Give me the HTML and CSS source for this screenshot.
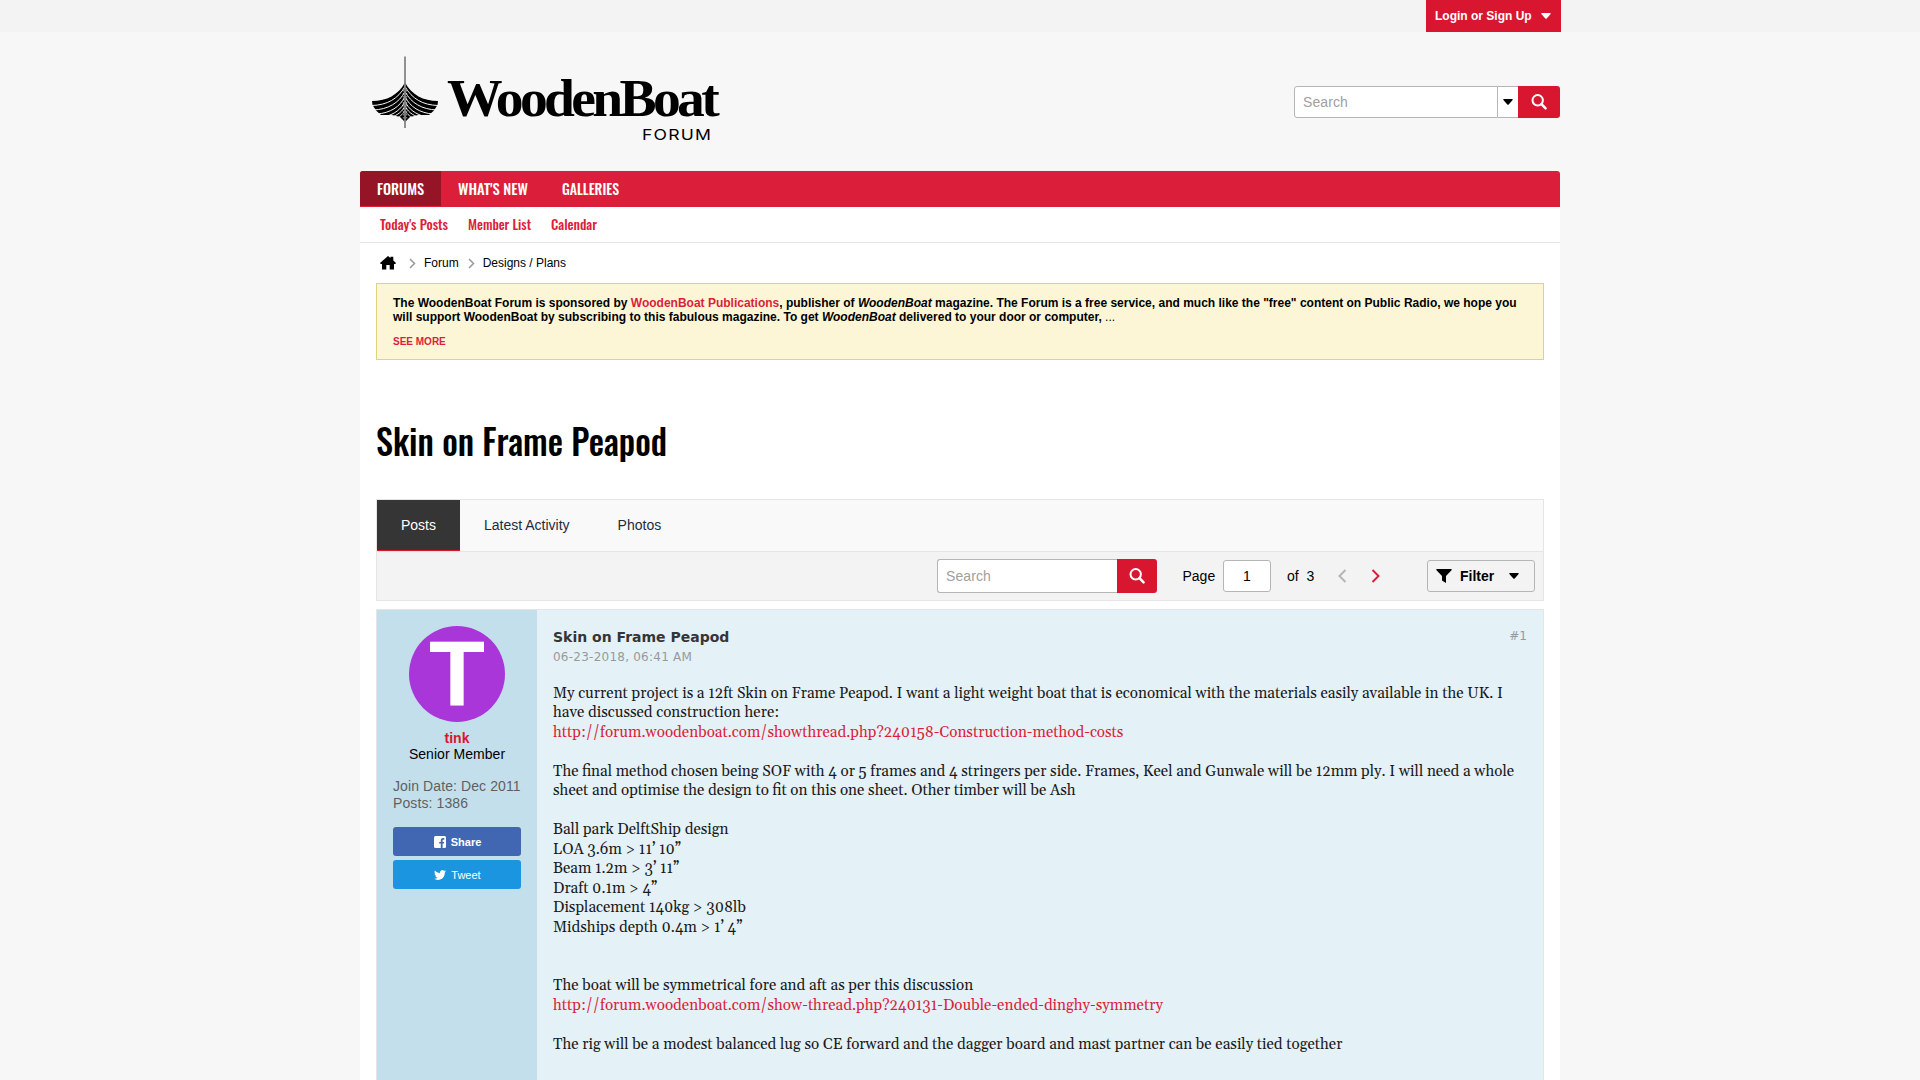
FILE: index.html
```html
<!DOCTYPE html>
<html lang="en">
<head>
<meta charset="utf-8">
<title>Skin on Frame Peapod - The WoodenBoat Forum</title>
<link rel="stylesheet" href="styles.css">
</head>
<body>
<div class="topbar"><div class="wrap topbar-in">
  <a class="login">Login or Sign Up <svg width="10" height="6" viewBox="0 0 10 6"><path d="M.6 0H9.4Q10 .3 9.6 1L5.7 5.4Q5 6 4.3 5.4L.4 1Q0 .3 .6 0Z" fill="#fff"/></svg></a>
</div></div>
<header class="wrap header">
  <svg class="logo" width="380" height="100" viewBox="360 47 380 100">
    <g id="half">
      <path d="M405 82.500C398 95 387 101 372 101L372.500 105L376 110.500L381 115H392L400 117L405 122Z"/>
      <g fill="none" stroke="#f7f7f7">
        <path d="M405 86.500C398 99 387 105 372 105.500" stroke-width="1"/>
        <path d="M405 91.500C399 103 388 109.500 373 110" stroke-width="1"/>
        <path d="M405 96.500C400 107 390 113 377 114" stroke-width="1"/>
        <path d="M405 101C402 109 394 114.500 384 117" stroke-width="1"/>
        <path d="M405 105.500C403 111 398 115 390 118" stroke-width="1"/>
        <path d="M405 110C404 113 401 116 396 118.500" stroke-width=".9"/>
      </g>
    </g>
    <use href="#half" transform="translate(810 0) scale(-1 1)"/>
    <path d="M405 56.500V128" stroke="#858585" stroke-width="1.800"/>
    <path d="M403.300 90V119M406.700 90V119" stroke="#ddd" stroke-width=".7" stroke-dasharray="1.500 1.500"/>
    <text class="logo-name" x="447" y="116" textLength="269" lengthAdjust="spacingAndGlyphs">WoodenBoat</text>
    <text class="logo-sub" x="642" y="139.500" textLength="70" lengthAdjust="spacingAndGlyphs">FORUM</text>
  </svg>
  <div class="search">
    <div class="search-input">Search</div>
    <div class="search-drop"><svg width="10" height="6" viewBox="0 0 10 6"><path d="M.6 0H9.4Q10 .3 9.6 1L5.700 5.400Q5 6 4.300 5.400L.4 1Q0 .3 .6 0Z"/></svg></div>
    <div class="search-go"><svg width="16" height="16" viewBox="0 0 16 16" fill="none" stroke="#fff" stroke-width="2"><circle cx="6.700" cy="6.300" r="5.200"/><path d="M10.500 10.200L14.600 14.400" stroke-width="2.500" stroke-linecap="round"/></svg></div>
  </div>
</header>
<main class="wrap page">
  <nav class="nav">
    <a class="nav-item nav-on"><svg width="47" height="18"><text x="0" y="15" textLength="47" lengthAdjust="spacingAndGlyphs">FORUMS</text></svg></a>
    <a class="nav-item"><svg width="70" height="18"><text x="0" y="15" textLength="70" lengthAdjust="spacingAndGlyphs">WHAT'S NEW</text></svg></a>
    <a class="nav-item"><svg width="57" height="18"><text x="0" y="15" textLength="57" lengthAdjust="spacingAndGlyphs">GALLERIES</text></svg></a>
  </nav>
  <div class="subnav">
    <svg width="68" height="18"><text x="0" y="15" textLength="68" lengthAdjust="spacingAndGlyphs">Today's Posts</text></svg>
    <svg width="63" height="18"><text x="0" y="15" textLength="63" lengthAdjust="spacingAndGlyphs">Member List</text></svg>
    <svg width="46" height="18"><text x="0" y="15" textLength="46" lengthAdjust="spacingAndGlyphs">Calendar</text></svg>
  </div>
  <div class="crumbs">
    <svg class="home" width="16" height="14" viewBox="0 0 16 14"><path d="M8 0L10.500 2V.8H13.300V4.400L16 7L15.300 8H14V13.500H9.700V9H6.300V13.500H2V8H.7L0 7Z"/></svg>
    <svg class="chev" width="7" height="11" viewBox="0 0 7 11"><path d="M1 1L5.500 5.500L1 10" fill="none" stroke="#999" stroke-width="1.500"/></svg>
    <span>Forum</span>
    <svg class="chev" width="7" height="11" viewBox="0 0 7 11"><path d="M1 1L5.500 5.500L1 10" fill="none" stroke="#999" stroke-width="1.500"/></svg>
    <span>Designs / Plans</span>
  </div>
  <section class="notice">
    <b>The WoodenBoat Forum is sponsored by <a>WoodenBoat Publications</a>, publisher of <i>WoodenBoat</i> magazine. The Forum is a free service, and much like the "free" content on Public Radio, we hope you<br>will support WoodenBoat by subscribing to this fabulous magazine. To get <i>WoodenBoat</i> delivered to your door or computer,</b> ...
    <a class="more">SEE MORE</a>
  </section>
  <h1 class="title"><svg width="292" height="50"><text x="0" y="41.500" textLength="291" lengthAdjust="spacingAndGlyphs">Skin on Frame Peapod</text></svg></h1>
  <div class="tabs"><a class="tab tab-on">Posts</a><a class="tab">Latest Activity</a><a class="tab">Photos</a></div>
  <div class="tools">
    <div class="tsearch"><div class="tsearch-input">Search</div><div class="tsearch-go"><svg width="16" height="16" viewBox="0 0 16 16" fill="none" stroke="#fff" stroke-width="2"><circle cx="6.700" cy="6.300" r="5.200"/><path d="M10.500 10.200L14.600 14.400" stroke-width="2.500" stroke-linecap="round"/></svg></div></div>
    <span class="pg">Page</span><div class="pgnum">1</div><span class="of">of&nbsp; 3</span>
    <svg class="prev" width="9" height="14" viewBox="0 0 9 14"><path d="M7.500 1L1.500 7L7.500 13" fill="none" stroke="#b5b5b5" stroke-width="2"/></svg>
    <svg class="next" width="9" height="14" viewBox="0 0 9 14"><path d="M1.500 1L7.500 7L1.500 13" fill="none" stroke="#db1f3a" stroke-width="2"/></svg>
    <div class="filter"><svg width="16" height="14" viewBox="0 0 16 14"><path d="M.6 0H15.400Q16 .6 15.500 1.300L10 7V14L6 11.500V7L.5 1.300Q0 .6 .6 0Z"/></svg><b>Filter</b><svg width="10" height="6" viewBox="0 0 10 6"><path d="M.6 0H9.400Q10 .3 9.600 1L5.700 5.400Q5 6 4.300 5.400L.4 1Q0 .3 .6 0Z"/></svg></div>
  </div>
  <article class="post">
    <aside class="user">
      <svg class="avatar" width="96" height="96"><circle cx="48" cy="48" r="48" fill="#a836d9"/><text x="48" y="80" text-anchor="middle" textLength="56" lengthAdjust="spacingAndGlyphs">T</text></svg>
      <b class="uname">tink</b><span class="rank">Senior Member</span>
      <div class="stats">Join Date: Dec 2011<br>Posts: 1386</div>
      <a class="soc fb"><svg width="12" height="12" viewBox="0 0 12 12"><rect width="12" height="12" rx="1.500" fill="#fff"/><path d="M6.800 12V7.600H5.200V5.900H6.800V4.600C6.800 2.900 7.700 2.100 9.200 2.100H10.300V3.700H9.500C8.800 3.700 8.600 4 8.600 4.600V5.900H10.200L9.900 7.600H8.600V12Z" fill="#4267b2"/></svg><b>Share</b></a>
      <a class="soc tw"><svg width="12" height="12" viewBox="0 0 24 24"><path fill="#fff" d="M23.950 4.570a10 10 0 0 1-2.820.77 4.960 4.960 0 0 0 2.160-2.720c-.95.550-2 .95-3.130 1.180a4.920 4.920 0 0 0-8.380 4.480C7.690 8.090 4.070 6.130 1.640 3.160a4.920 4.920 0 0 0 1.520 6.570 4.900 4.900 0 0 1-2.230-.61v.06a4.920 4.920 0 0 0 3.950 4.830 4.900 4.900 0 0 1-2.210.08 4.930 4.930 0 0 0 4.600 3.420A9.870 9.870 0 0 1 0 19.540a13.900 13.900 0 0 0 7.550 2.210c9.050 0 14-7.500 14-13.980v-.64a10 10 0 0 0 2.400-2.560z"/></svg><span>Tweet</span></a>
    </aside>
    <div class="content">
      <div class="phead"><b>Skin on Frame Peapod</b><span>#1</span></div>
      <div class="date">06-23-2018, 06:41 AM</div>
      <div class="text">My current project is a 12ft Skin on Frame Peapod. I want a light weight boat that is economical with the materials easily available in the UK. I<br>have discussed construction here:<br><a>http://forum.woodenboat.com/showthread.php?240158-Construction-method-costs</a><br><br>The final method chosen being SOF with 4 or 5 frames and 4 stringers per side. Frames, Keel and Gunwale will be 12mm ply. I will need a whole<br>sheet and optimise the design to fit on this one sheet. Other timber will be Ash<br><br>Ball park DelftShip design<br>LOA 3.6m &gt; 11’ 10”<br>Beam 1.2m &gt; 3’ 11”<br>Draft 0.1m &gt; 4”<br>Displacement 140kg &gt; 308lb<br>Midships depth 0.4m &gt; 1’ 4”<br><br><br>The boat will be symmetrical fore and aft as per this discussion<br><a>http://forum.woodenboat.com/show-thread.php?240131-Double-ended-dinghy-symmetry</a><br><br>The rig will be a modest balanced lug so CE forward and the dagger board and mast partner can be easily tied together</div>
    </div>
  </article>
</main>
</body>
</html>
```
FILE: styles.css
```css
* { box-sizing: border-box; }
html { overflow: hidden; }
body { margin: 0; height: 1080px; overflow: hidden; background: #f7f7f7; color: #000; font: 12px "Liberation Sans", Arial, sans-serif; }
svg { display: block; overflow: visible; flex: none; }
a { color: #db1f3a; }
.wrap { width: 1200px; margin: 0 auto; }
.topbar { height: 32px; background: #f3f3f3; }
.topbar-in { display: flex; justify-content: flex-end; }
.login { display: flex; align-items: center; gap: 9px; width: 135px; height: 32px; margin-right: -1px; padding-left: 9px; background: #d91630; color: #fff; font-weight: bold; white-space: nowrap; }
.header { height: 139px; display: flex; justify-content: space-between; padding-top: 15px; }
.logo-name { font: bold 53px "Liberation Serif", serif; letter-spacing: -3.5px; }
.logo-sub { font: 15px Inter, "Liberation Sans", sans-serif; letter-spacing: 1px; }
.search { display: flex; width: 266px; height: 32px; margin-top: 39px; font-size: 14px; }
.search-input { width: 204px; border: 1px solid #b5b5b5; border-radius: 3px 0 0 3px; background: #fff; padding: 0 8px; line-height: 30px; color: #a0a0a0; letter-spacing: .1px; }
.search-drop { width: 20px; border: 1px solid #b5b5b5; border-width: 1px 0; background: #fff; display: grid; place-items: center; }
.search-go { width: 42px; background: #d91630; border-radius: 0 3px 3px 0; display: grid; place-items: center; }
.page { height: 909px; background: #fff; border-radius: 3px 3px 0 0; overflow: hidden; }
.nav { height: 36px; background: #db1f3a; display: flex; }
.nav-item { height: 35px; padding: 9px 17px 0; }
.nav-on { background: #951526; }
.nav text, .subnav text, .title text { font-family: Oswald, "Liberation Sans Narrow", Roboto, sans-serif; font-weight: 500; }
.nav text { font-size: 15px; fill: #fff; }
.subnav { height: 36px; border-bottom: 1px solid #e5e5e5; display: flex; gap: 20px; padding: 8px 20px 0; }
.subnav text { font-size: 13.5px; fill: #db1f3a; }
.crumbs { height: 40px; display: flex; align-items: center; padding-left: 20px; }
.chev { margin: 0 8px 0 13px; }
.crumbs span + .chev { margin-left: 9px; }
.notice { margin: 0 16px; height: 77px; border: 1px solid #ddd47c; background: #fcf6d6; padding: 12px 16px; line-height: 14px; white-space: nowrap; }
.more { display: block; margin-top: 11px; font-size: 10px; font-weight: bold; }
.title { margin: 54px 16px 0; height: 85px; font-weight: normal; }
.title text { font-size: 36px; }
.tabs { margin: 0 16px; height: 53px; border: 1px solid #e5e5e5; background: #f9f9f9; display: flex; font-size: 14px; }
.tab { height: 51px; line-height: 50px; padding: 0 24px; color: #1d2c3d; }
.tab-on { background: #353535; color: #fff; border-bottom: 1px solid #d91630; }
.tools { margin: 0 16px; height: 49px; border: 1px solid #e5e5e5; border-top: 0; background: #f3f3f3; display: flex; align-items: center; padding-left: 560px; font-size: 14px; }
.tsearch { display: flex; width: 220px; height: 34px; margin-right: 25.5px; }
.tsearch-input { width: 180px; border: 1px solid #b5b5b5; border-right: 0; border-radius: 3px 0 0 3px; background: #fff; padding-left: 8px; line-height: 32px; color: #a0a0a0; letter-spacing: .1px; }
.tsearch-go { width: 40px; background: #d91630; border-radius: 0 3px 3px 0; display: grid; place-items: center; }
.pg { width: 40.5px; }
.pgnum { width: 48px; height: 32px; border: 1px solid #b5b5b5; border-radius: 3px; background: #fff; text-align: center; line-height: 31px; }
.of { margin-left: 16px; width: 51px; white-space: nowrap; }
.prev { margin-right: 24px; }
.next { margin-right: 47px; }
.filter { width: 108px; height: 32px; border: 1px solid #b5b5b5; border-radius: 3px; display: flex; align-items: center; padding-left: 8px; gap: 8px; }
.filter b { margin-right: 7px; }
.post { margin: 8px 16px 0; height: 480px; border: 1px solid #e5e5e5; background: #e4f1f7; display: flex; }
.user { width: 160px; background: #c3dfeb; padding: 16px; display: flex; flex-direction: column; align-items: center; font-size: 14px; }
.avatar text { font: bold 93px "Liberation Sans", sans-serif; fill: #fff; }
.uname { margin-top: 8px; line-height: 16px; color: #d91630; }
.rank { line-height: 16px; letter-spacing: .04px; }
.stats { align-self: flex-start; margin: 16px 0 15px; line-height: 17px; color: #5f5f5f; white-space: nowrap; letter-spacing: .1px; }
.soc { width: 128px; height: 29px; border-radius: 3px; margin-bottom: 4px; color: #fff; font-size: 11px; display: flex; align-items: center; justify-content: center; gap: 5px; padding-left: 1px; }
.fb { background: #4267b2; }
.tw { background: #1b95e0; }
.content { flex: 1; padding: 19px 16px; font-family: "DejaVu Sans", sans-serif; }
.phead { display: flex; justify-content: space-between; height: 18px; color: #999; }
.phead b { font-size: 14px; color: #353535; }
.date { color: #999; margin-top: 2px; line-height: 16px; letter-spacing: .24px; }
.text { margin-top: 18.75px; font: 15.2px/19.5px Georgia, Gelasio, serif; color: #1a1a1a; white-space: nowrap; }
```
